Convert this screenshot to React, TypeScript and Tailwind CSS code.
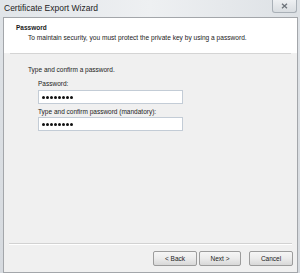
import React from "react";

const font = { fontFamily: '"Liberation Sans", Arial, sans-serif' };

function Dots() {
  return (
    <div className="flex items-center pl-[2px]">
      {Array.from({ length: 8 }).map((_, i) => (
        <span key={i} className="w-[4px] h-[4px] flex items-center justify-center">
          <span className="block w-[3px] h-[3px] rounded-full bg-[#111]" />
        </span>
      ))}
    </div>
  );
}

function Btn({ children, className = "" }: { children: React.ReactNode; className?: string }) {
  return (
    <div
      className={
        "h-[15px] flex items-center justify-center border border-[#9c9c9c] rounded-[2px] bg-gradient-to-b from-[#f6f6f6] via-[#ebebeb] to-[#d8d8d8] text-[6.5px] text-[#222] " +
        className
      }
    >
      {children}
    </div>
  );
}

export default function App() {
  return (
    <div
      className="w-[300px] h-[273px] flex flex-col bg-gradient-to-b from-[#dfe3e7] to-[#d6dadf] overflow-hidden"
      style={font}
    >
      {/* Title bar */}
      <div className="h-[17px] flex items-start relative bg-gradient-to-r from-[#e1e5e9] via-[#eef0f2] to-[#dde1e5]">
        <div className="pl-[4px] pt-[3px] text-[8.5px] leading-[10px] text-[#222]">Certificate Export Wizard</div>
        <div className="absolute right-[3px] top-0 w-[25px] h-[13px] border border-t-0 border-[#a9b0b7] rounded-b-[3px] bg-gradient-to-b from-[#eef0f2] to-[#d9dde1] flex items-center justify-center">
          <svg width="7" height="6" viewBox="0 0 7 6">
            <path d="M1 0.8 L6 5.2 M6 0.8 L1 5.2" stroke="#6d737a" strokeWidth="1.3" />
          </svg>
        </div>
      </div>

      {/* Inner window */}
      <div className="flex-1 ml-[3px] mr-[2px] border border-[#a3a6aa] bg-[#f0f0f0] flex flex-col">
        {/* Header */}
        <div className="h-[33px] bg-white flex flex-col">
          <div className="pl-[12px] pt-[5px] text-[6.5px] leading-[9px] font-bold text-[#1a1a1a]">Password</div>
          <div className="pl-[24px] pt-[1px] text-[6.6px] leading-[9px] text-[#222]">
            To maintain security, you must protect the private key by using a password.
          </div>
        </div>
        <div className="bg-white h-[2px]" />
        <div className="mx-[6px] border-t border-[#d4d4d4] h-[1px] bg-white" />

        {/* Content */}
        <div className="flex flex-col pl-[24px] pt-[11px]">
          <div className="text-[6.5px] leading-[9px] text-[#222]">Type and confirm a password.</div>
          <div className="pl-[10px] flex flex-col">
            <div className="mt-[5px] text-[6.5px] leading-[9px] text-[#222]">Password:</div>
            <div className="mt-[2px] w-[145px] h-[14px] bg-white border border-[#c3ccd6] flex items-center">
              <Dots />
            </div>
            <div className="mt-[3px] text-[6.5px] leading-[9px] text-[#222]">Type and confirm password (mandatory):</div>
            <div className="mt-[1px] w-[145px] h-[14px] bg-white border border-[#c3ccd6] flex items-center">
              <Dots />
            </div>
          </div>
        </div>

        <div className="flex-1" />

        {/* Bottom separator */}
        <div className="mx-[5px] border-t border-[#d2d2d2] h-[2px] bg-white" />

        {/* Buttons */}
        <div className="flex justify-end pr-[4px] pt-[6px] pb-[6px]">
          <Btn className="w-[44px]">&lt; Back</Btn>
          <Btn className="w-[42px] ml-[2px]">Next &gt;</Btn>
          <Btn className="w-[44px] ml-[8px]">Cancel</Btn>
        </div>
      </div>
    </div>
  );
}
